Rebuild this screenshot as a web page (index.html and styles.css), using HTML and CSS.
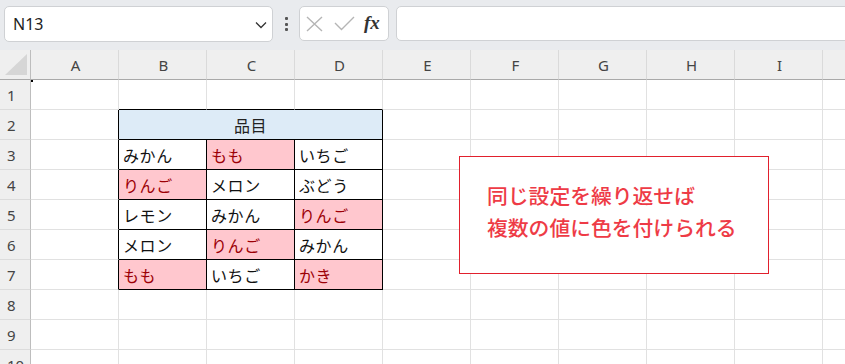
FILE: index.html
```html
<!DOCTYPE html>
<html lang="ja">
<head>
    <meta charset="UTF-8">
    <title>条件付き書式 - 複数の値</title>
    <link rel="stylesheet" href="styles.css">
</head>
<body>
    <!-- Name box and formula bar -->
    <div class="toolbar">
        <div class="namebox">
            <span>N13</span>
            <svg class="chevron" width="12" height="8" viewBox="0 0 12 8"><path d="M1 1.5 L6 6.5 L11 1.5" fill="none" stroke="#333" stroke-width="1.3"/></svg>
        </div>
        <div class="dots"><i></i><i></i><i></i></div>
        <div class="fxbox">
            <svg width="17" height="16" viewBox="0 0 17 16"><path d="M1 1 L16 15 M16 1 L1 15" stroke="#b5b5b5" stroke-width="1.4" fill="none"/></svg>
            <svg width="21" height="15" viewBox="0 0 21 15"><path d="M1 7 L7.5 13.5 L20 1" stroke="#b5b5b5" stroke-width="1.4" fill="none"/></svg>
            <span class="fx">fx</span>
        </div>
        <div class="formula"></div>
    </div>

    <!-- Sheet -->
    <div class="sheet">
        <div class="corner"><svg width="22" height="21" viewBox="0 0 22 21"><path d="M22 0 L22 21 L0 21 Z" fill="#d6d6d6"/></svg></div>
        <div class="col">A</div><div class="col">B</div><div class="col">C</div><div class="col">D</div><div class="col">E</div><div class="col">F</div><div class="col">G</div><div class="col">H</div><div class="col">I</div><div class="col"></div>

        <div class="num">1</div>
        <div class="c sel"></div><div class="c tt"></div><div class="c tt"></div><div class="c tt"></div><div class="c"></div><div class="c"></div><div class="c"></div><div class="c"></div><div class="c"></div><div class="c"></div>

        <div class="num">2</div>
        <div class="c tl"></div><div class="c t head">品目</div><div class="c"></div><div class="c"></div><div class="c"></div><div class="c"></div><div class="c"></div><div class="c"></div>

        <div class="num">3</div>
        <div class="c tl"></div><div class="c t">みかん</div><div class="c t hit">もも</div><div class="c t">いちご</div><div class="c"></div><div class="c"></div><div class="c"></div><div class="c"></div><div class="c"></div><div class="c"></div>

        <div class="num">4</div>
        <div class="c tl"></div><div class="c t hit">りんご</div><div class="c t">メロン</div><div class="c t">ぶどう</div><div class="c"></div><div class="c"></div><div class="c"></div><div class="c"></div><div class="c"></div><div class="c"></div>

        <div class="num">5</div>
        <div class="c tl"></div><div class="c t">レモン</div><div class="c t">みかん</div><div class="c t hit">りんご</div><div class="c"></div><div class="c"></div><div class="c"></div><div class="c"></div><div class="c"></div><div class="c"></div>

        <div class="num">6</div>
        <div class="c tl"></div><div class="c t">メロン</div><div class="c t hit">りんご</div><div class="c t">みかん</div><div class="c"></div><div class="c"></div><div class="c"></div><div class="c"></div><div class="c"></div><div class="c"></div>

        <div class="num">7</div>
        <div class="c tl"></div><div class="c t hit">もも</div><div class="c t">いちご</div><div class="c t hit">かき</div><div class="c"></div><div class="c"></div><div class="c"></div><div class="c"></div><div class="c"></div><div class="c"></div>

        <div class="num">8</div>
        <div class="c"></div><div class="c"></div><div class="c"></div><div class="c"></div><div class="c"></div><div class="c"></div><div class="c"></div><div class="c"></div><div class="c"></div><div class="c"></div>

        <div class="num">9</div>
        <div class="c"></div><div class="c"></div><div class="c"></div><div class="c"></div><div class="c"></div><div class="c"></div><div class="c"></div><div class="c"></div><div class="c"></div><div class="c"></div>

        <div class="num">10</div>
        <div class="c"></div><div class="c"></div><div class="c"></div><div class="c"></div><div class="c"></div><div class="c"></div><div class="c"></div><div class="c"></div><div class="c"></div><div class="c"></div>

        <!-- Text box shape over the sheet -->
        <div class="note">同じ設定を繰り返せば<br>複数の値に色を付けられる</div>
    </div>
</body>
</html>
```

FILE: styles.css
```css
body {
    margin: 0;
    width: 845px;
    height: 364px;
    overflow: hidden;
    font-family: "Noto Sans", "Noto Sans CJK JP", sans-serif;
    background: #fff;
}

/* Toolbar */
.toolbar {
    height: 50px;
    box-sizing: border-box;
    background: #e9ebee;
    display: flex;
    align-items: flex-start;
    padding: 6px 0 0 4px;
}

.namebox {
    width: 269px;
    height: 36px;
    box-sizing: border-box;
    background: #fff;
    border: 1px solid #cfd1d4;
    border-radius: 5px;
    display: flex;
    align-items: center;
    justify-content: space-between;
    padding: 0 5px 0 8px;
    font-size: 16px;
    color: #222;
}

.chevron {
    margin-top: 1px;
}

.dots {
    width: 26px;
    height: 36px;
    display: flex;
    flex-direction: column;
    align-items: center;
    justify-content: center;
    gap: 2.5px;
}

.dots i {
    width: 3px;
    height: 3px;
    background: #555;
    border-radius: 1px;
}

.fxbox {
    width: 90px;
    height: 35px;
    box-sizing: border-box;
    background: #fff;
    border: 1px solid #cfd1d4;
    border-radius: 5px;
    display: flex;
    align-items: center;
    padding: 0 0 0 6px;
    gap: 11px;
}

.fx {
    font-family: "Liberation Serif", serif;
    font-style: italic;
    font-weight: bold;
    font-size: 19px;
    color: #333;
    margin-left: -2px;
    margin-top: -2px;
}

.formula {
    flex: 1;
    height: 35px;
    margin-left: 7px;
    margin-right: -10px;
    box-sizing: border-box;
    background: #fff;
    border: 1px solid #cfd1d4;
    border-radius: 5px;
}

/* Sheet grid */
.sheet {
    position: relative;
    display: grid;
    grid-template-columns: 31px repeat(9, 88px) 40px;
    grid-auto-rows: 30px;
}

.sheet > div {
    box-sizing: border-box;
}

.corner {
    background: #efefef;
    border-right: 1px solid #bdbdbd;
    border-bottom: 1px solid #a9a9a9;
    padding: 4px 0 0 5px;
}

.corner svg {
    display: block;
}

.col {
    background: #efefef;
    border-right: 1px solid #dadada;
    border-bottom: 1px solid #a9a9a9;
    display: flex;
    align-items: center;
    justify-content: center;
    font-size: 15px;
    color: #444;
    padding-left: 2px;
}

.num {
    background: #efefef;
    border-right: 1px solid #bdbdbd;
    border-bottom: 1px solid #dcdcdc;
    display: flex;
    align-items: center;
    padding-left: 7px;
    font-size: 15px;
    color: #444;
}

.c {
    border-right: 1px solid #e1e1e1;
    border-bottom: 1px solid #e1e1e1;
    display: flex;
    align-items: center;
    padding-left: 4px;
    font-family: "Noto Sans CJK JP", sans-serif;
    font-size: 16px;
    letter-spacing: 0.6px;
    color: #111;
}

/* Selected-cell marker */
.sel {
    position: relative;
}

.sel::before {
    content: "";
    position: absolute;
    left: 0;
    top: 0;
    width: 2px;
    height: 2px;
    background: #000;
}

/* Bordered table B2:D7 */
.tt {
    border-bottom-color: #000;
}

.tl {
    border-right-color: #000;
}

.t {
    border-right-color: #000;
    border-bottom-color: #000;
}

.head {
    grid-column: span 3;
    background: #ddebf7;
    justify-content: center;
    padding-left: 0;
    color: #222;
}

.hit {
    background: #ffc7ce;
    color: #9c0006;
}

/* Callout text box */
.note {
    position: absolute;
    left: 459px;
    top: 106px;
    width: 310px;
    height: 118px;
    box-sizing: border-box;
    background: #fff;
    border: 1px solid #e1202d;
    padding: 22px 0 0 27px;
    font-family: "Noto Sans CJK JP", sans-serif;
    font-size: 20.8px;
    font-weight: 500;
    line-height: 32px;
    color: #ee3b46;
}
```
